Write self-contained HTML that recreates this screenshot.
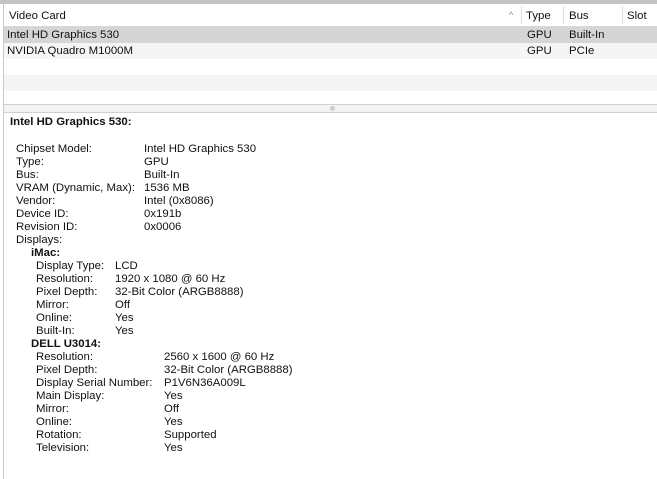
<!DOCTYPE html><html><head><style>
*{margin:0;padding:0;box-sizing:border-box}
body{width:657px;height:479px;background:#fff;font-family:"Liberation Sans",sans-serif;font-size:11.4px;color:#111;position:relative;overflow:hidden}
.a{position:absolute;white-space:nowrap}
.l{position:absolute;left:0;right:0;height:13px;line-height:13px}
.l span{position:absolute;white-space:nowrap}
b{font-weight:bold}
</style></head><body>
<div class="a" style="left:0;top:0;width:657px;height:4px;background:#c4c4c4"></div>
<div class="a" style="left:3px;top:4px;width:1px;height:475px;background:#c9c9c9"></div>
<div class="a" style="left:4px;top:4px;right:0;height:23px;background:#fff;border-bottom:1px solid #d8d8d8"></div>
<div class="a" style="left:9px;top:10px;font-size:11.4px">Video Card</div>
<div class="a" style="left:509px;top:10px;color:#888;font-size:9px">^</div>
<div class="a" style="left:521px;top:6px;width:1px;height:18px;background:#ddd"></div>
<div class="a" style="left:526px;top:10px">Type</div>
<div class="a" style="left:563px;top:6px;width:1px;height:18px;background:#ddd"></div>
<div class="a" style="left:569px;top:10px">Bus</div>
<div class="a" style="left:622px;top:6px;width:1px;height:18px;background:#ddd"></div>
<div class="a" style="left:627px;top:10px">Slot</div>
<div class="a" style="left:4px;top:27px;right:0;height:16px;background:#d5d5d5"></div>
<div class="a" style="left:4px;top:43px;right:0;height:16px;background:#f5f5f5"></div>
<div class="a" style="left:4px;top:75px;right:0;height:16px;background:#f5f5f5"></div>
<div class="a" style="left:7px;top:29px">Intel HD Graphics 530</div>
<div class="a" style="left:527px;top:29px">GPU</div>
<div class="a" style="left:569px;top:29px">Built-In</div>
<div class="a" style="left:7px;top:45px">NVIDIA Quadro M1000M</div>
<div class="a" style="left:527px;top:45px">GPU</div>
<div class="a" style="left:569px;top:45px">PCIe</div>
<div class="a" style="left:4px;top:104px;right:0;height:9px;background:#f3f3f3;border-top:1px solid #d0d0d0;border-bottom:1px solid #d0d0d0"></div>
<div class="a" style="left:330px;top:106px;width:5px;height:5px;border-radius:50%;background:#ccc"></div>
<div class="a" style="left:10px;top:116px"><b>Intel HD Graphics 530:</b></div>
<div class="l" style="top:143px"><span style="left:16px">Chipset Model:</span><span style="left:144px">Intel HD Graphics 530</span></div>
<div class="l" style="top:156px"><span style="left:16px">Type:</span><span style="left:144px">GPU</span></div>
<div class="l" style="top:169px"><span style="left:16px">Bus:</span><span style="left:144px">Built-In</span></div>
<div class="l" style="top:182px"><span style="left:16px">VRAM (Dynamic, Max):</span><span style="left:144px">1536 MB</span></div>
<div class="l" style="top:195px"><span style="left:16px">Vendor:</span><span style="left:144px">Intel (0x8086)</span></div>
<div class="l" style="top:208px"><span style="left:16px">Device ID:</span><span style="left:144px">0x191b</span></div>
<div class="l" style="top:221px"><span style="left:16px">Revision ID:</span><span style="left:144px">0x0006</span></div>
<div class="l" style="top:234px"><span style="left:16px">Displays:</span></div>
<div class="l" style="top:247px"><span style="left:31px"><b>iMac:</b></span></div>
<div class="l" style="top:260px"><span style="left:36px">Display Type:</span><span style="left:115px">LCD</span></div>
<div class="l" style="top:273px"><span style="left:36px">Resolution:</span><span style="left:115px">1920 x 1080 @ 60 Hz</span></div>
<div class="l" style="top:286px"><span style="left:36px">Pixel Depth:</span><span style="left:115px">32-Bit Color (ARGB8888)</span></div>
<div class="l" style="top:299px"><span style="left:36px">Mirror:</span><span style="left:115px">Off</span></div>
<div class="l" style="top:312px"><span style="left:36px">Online:</span><span style="left:115px">Yes</span></div>
<div class="l" style="top:325px"><span style="left:36px">Built-In:</span><span style="left:115px">Yes</span></div>
<div class="l" style="top:338px"><span style="left:31px"><b>DELL U3014:</b></span></div>
<div class="l" style="top:351px"><span style="left:36px">Resolution:</span><span style="left:164px">2560 x 1600 @ 60 Hz</span></div>
<div class="l" style="top:364px"><span style="left:36px">Pixel Depth:</span><span style="left:164px">32-Bit Color (ARGB8888)</span></div>
<div class="l" style="top:377px"><span style="left:36px">Display Serial Number:</span><span style="left:164px">P1V6N36A009L</span></div>
<div class="l" style="top:390px"><span style="left:36px">Main Display:</span><span style="left:164px">Yes</span></div>
<div class="l" style="top:403px"><span style="left:36px">Mirror:</span><span style="left:164px">Off</span></div>
<div class="l" style="top:416px"><span style="left:36px">Online:</span><span style="left:164px">Yes</span></div>
<div class="l" style="top:429px"><span style="left:36px">Rotation:</span><span style="left:164px">Supported</span></div>
<div class="l" style="top:442px"><span style="left:36px">Television:</span><span style="left:164px">Yes</span></div>
</body></html>
